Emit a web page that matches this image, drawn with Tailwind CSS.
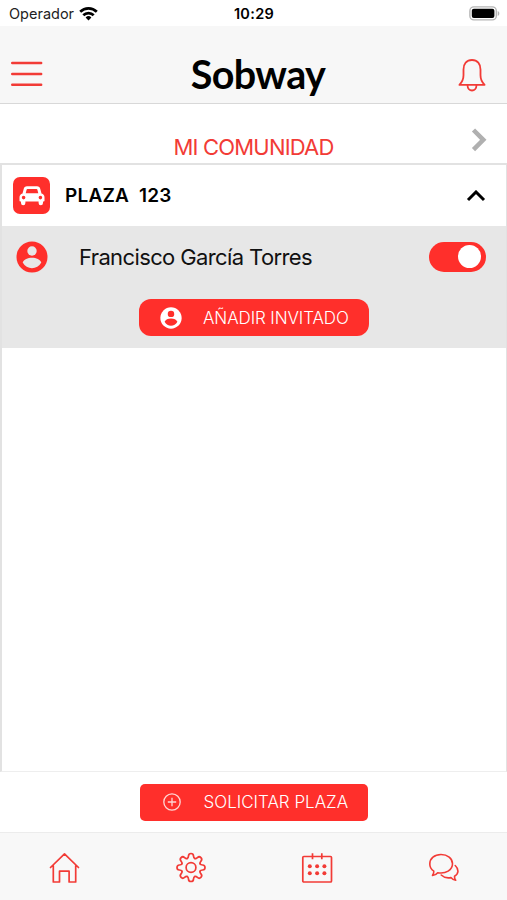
<!DOCTYPE html>
<html lang="es">

<head>
    <meta charset="UTF-8">
    <meta name="viewport" content="width=device-width, initial-scale=1.0">
    <title>Sobway</title>
    <script src="https://cdn.jsdelivr.net/npm/@tailwindcss/browser@4"></script>
</head>

<body class="bg-white text-black font-['Inter',sans-serif]">
    <div class="h-[900px] w-full flex flex-col overflow-hidden">
        <!-- Status bar -->
        <div class="h-[26px] shrink-0 grid grid-cols-3 items-center pl-[8px] pr-[7px]">
            <div class="flex items-center gap-[5px] pl-px">
                <span class="text-[14.5px] leading-[26px] text-[#222] pt-px">Operador</span>
                <svg class="w-[19px] h-[15px]" viewBox="0 0 19 15" fill="none" stroke="#000" stroke-width="2.7">
                    <path d="M1.2 5.800a11.800 11.800 0 0 1 16.600 0" />
                    <path d="M4.300 9.200a7.400 7.400 0 0 1 10.400 0" />
                    <path d="M9.500 14.500l-2.900-3a4.200 4.200 0 0 1 5.800 0z" fill="#000" stroke="none" />
                </svg>
            </div>
            <span class="text-center text-[14.500px] leading-[26px] font-semibold tracking-[0.3px] pt-px">10:29</span>
            <svg class="justify-self-end w-[31px] h-[15px]" viewBox="0 0 31 15">
                <rect x=".9" y=".9" width="26.4" height="13" rx="4" fill="#fff" stroke="#b5b5b5" stroke-width="1.4" />
                <rect x="2.8" y="2.7" width="22.6" height="9.4" rx="2" fill="#000" />
                <path d="M28.7 5v5c2.2-1 2.2-4 0-5z" fill="#b5b5b5" />
            </svg>
        </div>

        <!-- Header -->
        <header class="h-[78px] shrink-0 grid grid-cols-[1fr_auto_1fr] items-center pl-[21px] pr-[12px] pt-[18px] bg-[#f7f7f7] border-b border-[#d8d8d8]">
            <svg class="-ml-[10px] w-8 h-[26px]" viewBox="0 0 32 26" stroke="#f23b36" stroke-width="2.4" stroke-linecap="round">
                <path d="M1.200 2h29M1.200 13h29M1.200 23.800h29" />
            </svg>
            <h1 class="font-['Lato',sans-serif] font-bold text-[39.5px] leading-[50px] tracking-[-0.65px]">Sobway</h1>
            <svg class="justify-self-end mr-[9px] mt-[3px] w-7 h-[33px]" viewBox="0 0 28 33" fill="none" stroke="#f23b36" stroke-width="1.8" stroke-linejoin="round">
                <path d="M14 1C8.500 1 5.500 5 5.500 10.500v5.800c0 4.300-1.100 6.600-4.100 9.500h25.200c-3-2.900-4.100-5.200-4.100-9.500v-5.800C22.500 5 19.500 1 14 1z" />
                <path d="M9.500 26c0 7.300 9 7.300 9 0" />
            </svg>
        </header>

        <!-- Community -->
        <div class="h-[59px] shrink-0 grid grid-cols-[1fr_auto_1fr]">
            <span class="col-start-2 self-end text-[22px] leading-8 tracking-[-0.8px] text-[#f23b36]">MI COMUNIDAD</span>
            <svg class="justify-self-end mt-6 mr-5 w-4 h-6" viewBox="0 0 16 24" fill="none" stroke="#b0b0b0" stroke-width="4.500">
                <path d="M2.500 2l9.800 9.800-9.800 9.800" />
            </svg>
        </div>

        <!-- Parking spots -->
        <main class="grow border-2 border-r border-b-[1px] border-[#e2e2e2] border-b-[#eeeeee]">
            <div class="h-[61px] flex items-center pl-[11px] pr-5">
                <div class="w-[37px] h-[37px] rounded-[7px] bg-[#ff2f2b] flex items-center justify-center">
                    <svg class="w-[26px] h-5" viewBox="0 0 26 20">
                        <path fill="#fff" fill-rule="evenodd" d="M8 .3h10c1.800 0 2.900 1 3.300 2.700l1.200 4.400c2 .4 3 2 3 4v3.300c0 .5-.3.800-.8.800h-.7v1.500a2.200 2.200 0 0 1-4.400 0v-1.500H6.400V17A2.200 2.200 0 0 1 2 17v-1.500h-.7c-.5 0-.8-.3-.8-.8v-3.300c0-2 1-3.600 3-4L4.700 3C5.100 1.300 6.200.3 8 .3zM6.700 7.300h12.600l-.9-3.500c-.1-.5-.4-.7-.8-.7H8.400c-.4 0-.7.2-.8.700zM4.600 9.800a1.800 1.800 0 1 0 0 3.600 1.800 1.800 0 0 0 0-3.600zM21.400 9.800a1.800 1.800 0 1 0 0 3.600 1.800 1.800 0 0 0 0-3.600z" />
                    </svg>
                </div>
                <span class="ml-[15px] pt-[2px] text-[19px] font-semibold tracking-[0.2px] whitespace-pre">PLAZA  123</span>
                <svg class="ml-auto w-5 h-3" viewBox="0 0 20 12" fill="none" stroke="#000" stroke-width="3">
                    <path d="M2 10l8-8 8 8" />
                </svg>
            </div>
            <div class="h-[122px] bg-[#e7e7e7]">
                <div class="h-[61px] flex items-center pl-[14px] pr-5">
                    <svg class="w-8 h-8" viewBox="0 0 32 32">
                        <circle cx="16" cy="16" r="15.500" fill="#ff2f2b" />
                        <circle cx="16" cy="10" r="4.700" fill="#e7e7e7" />
                        <path d="M6.700 21.500c2-6.500 16.600-6.500 18.600 0-4 7.500-14.600 7.500-18.600 0z" fill="#e7e7e7" />
                    </svg>
                    <span class="ml-[31px] pt-[2px] text-[22px] tracking-[-0.62px] text-[#111]">Francisco García Torres</span>
                    <div class="ml-auto w-[57px] h-[30px] rounded-full bg-[#ff2f2b] flex items-center justify-end pr-[5px]">
                        <div class="w-[23px] h-[23px] rounded-full bg-white"></div>
                    </div>
                </div>
                <button class="mt-3 ml-[137px] w-[230px] h-[37px] rounded-[12px] bg-[#ff2f2b] flex items-center pl-[21px] text-white">
                    <svg class="w-[22px] h-[22px]" viewBox="0 0 32 32">
                        <circle cx="16" cy="16" r="15.500" fill="#fff" />
                        <circle cx="16" cy="10" r="4.700" fill="#ff2f2b" />
                        <path d="M6.700 21.500c2-6.500 16.600-6.500 18.600 0-4 7.500-14.600 7.500-18.600 0z" fill="#ff2f2b" />
                    </svg>
                    <span class="ml-[21px] pt-[2px] text-[17px] font-light tracking-[-0.1px] whitespace-nowrap">AÑADIR INVITADO</span>
                </button>
            </div>
        </main>

        <!-- Request -->
        <div class="h-[60px] shrink-0 flex items-center justify-center">
            <button class="w-[228px] h-[37px] rounded-[5px] bg-[#ff2f2b] flex items-center pl-[23px] text-white">
                <svg class="w-[18px] h-[18px]" viewBox="0 0 18 18" fill="none" stroke="#ffd6d4" stroke-width="1.300">
                    <circle cx="9" cy="9" r="8.200" />
                    <path d="M9 4.800v8.400M4.800 9h8.400" />
                </svg>
                <span class="ml-[23px] pt-[2px] text-[17px] font-light whitespace-nowrap">SOLICITAR PLAZA</span>
            </button>
        </div>

        <!-- Tab bar -->
        <nav class="h-[68px] shrink-0 grid grid-cols-4 justify-items-center pt-[19px] bg-[#f8f8f8] border-t border-[#ececec]">
            <svg class="ml-px w-8 h-8" viewBox="0 0 32 32" fill="none" stroke="#f23b36" stroke-width="1.700" stroke-linejoin="round" stroke-linecap="round">
                <path d="M2.500 15.500L16.500 1.800l14 13.700M5.300 13.500V30h6.200V19.200h9.600V30h6.600V13.500" />
            </svg>
            <svg class="ml-px w-8 h-8" viewBox="-16 -15.500 32 32" fill="none" stroke="#f23b36" stroke-width="1.700" stroke-linecap="round">
                <g id="teeth">
                    <path id="tooth" d="M-3.750-9.050C-2.900-9.400-2.600-10.100-2.500-11.600-2.400-13.200-1.500-14 0-14s2.400.8 2.500 2.400C2.600-10.100 2.900-9.400 3.750-9.050" />
                    <use href="#tooth" transform="rotate(45)" />
                    <use href="#tooth" transform="rotate(90)" />
                    <use href="#tooth" transform="rotate(135)" />
                </g>
                <use href="#teeth" transform="rotate(180)" />
                <circle r="4.900" />
            </svg>
            <svg class="w-8 h-8" viewBox="0 0 32 32" fill="none" stroke="#f23b36" stroke-width="1.700">
                <rect x="1.800" y="4.500" width="28.700" height="25.500" rx="1" />
                <path d="M11.500 1.300v6M20.800 1.300v6" />
                <g fill="#f23b36" stroke="none">
                    <circle cx="8.800" cy="14.200" r="2" />
                    <circle cx="16.100" cy="14.200" r="2" />
                    <circle cx="23.400" cy="14.200" r="2" />
                    <circle cx="8.800" cy="21.300" r="2" />
                    <circle cx="16.100" cy="21.300" r="2" />
                    <circle cx="23.400" cy="21.300" r="2" />
                </g>
            </svg>
            <svg class="w-8 h-8" viewBox="0 0 32 32" fill="none" stroke="#f23b36" stroke-width="1.600" stroke-linejoin="round" stroke-linecap="round">
                <path d="M13 2.500C6.500 2.500 1.800 6.500 1.800 12c0 3 1.500 5.500 4 7.100.1 1.800-.3 3-1.300 4.400 2.500-.2 4-1.200 5.200-2.800 8.100 1.500 14.800-2.800 14.800-8.900 0-5.300-5-9.300-11.500-9.300z" />
                <path d="M27.200 13.500c3.900 3.500 3.700 8.300-.7 10.700-.1 1.500.3 2.900 1.200 4.100-2.200-.3-3.600-1.200-4.800-2.700-3.600.7-7.100-.1-9.700-2.600" />
            </svg>
        </nav>
    </div>
</body>

</html>
